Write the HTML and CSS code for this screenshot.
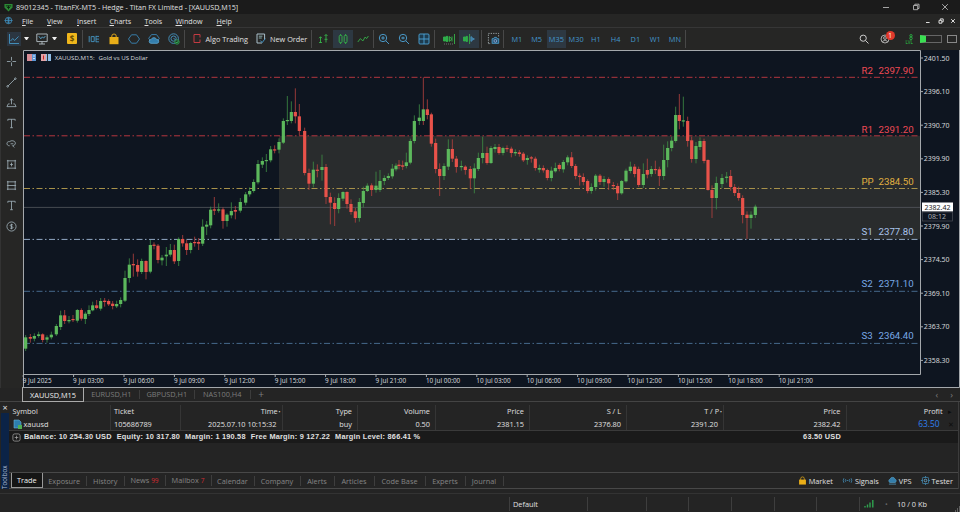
FILE: index.html
```
<!DOCTYPE html>
<html lang="en">
<head>
  <meta charset="UTF-8">
  <title>89012345 - TitanFX-MT5</title>
  <link rel="stylesheet" href="styles.css">
</head>
<body>

<div class="titlebar">
  <svg class="logo" viewBox="0 0 10 10"><path d="M.5 1h9v4L5 9.500.500 5z" fill="#2c8a35"/><path d="M2 3.200h6M5 3v4M3.300 5h3.400" stroke="#0d2411" fill="none"/></svg>
  <span class="title">89012345 - TitanFX-MT5 - Hedge - Titan FX Limited - [XAUUSD,M15]</span>
  <div class="winbtns">
    <svg viewBox="0 0 8 8"><path d="M1 4.5h6"/></svg>
    <svg viewBox="0 0 8 8"><path d="M1.5 2.5h4.2v4.2H1.5zM2.8 2.4V1.2H7v4.3H5.8"/></svg>
    <svg viewBox="0 0 8 8"><path d="M1.2 1.2l5.6 5.6M6.8 1.2L1.2 6.8"/></svg>
  </div>
</div>

<div class="menubar">
  <svg class="globe" viewBox="0 0 10 10"><circle cx="5" cy="5" r="3.6"/><path d="M0.6 5h8.8M5 1.4v7.2M3.2 3.2h3.6M3.2 6.8h3.6"/></svg>
  <div class="menu">
    <span><u>F</u>ile</span><span><u>V</u>iew</span><span><u>I</u>nsert</span><span><u>C</u>harts</span><span><u>T</u>ools</span><span><u>W</u>indow</span><span><u>H</u>elp</span>
  </div>
  <div class="docbtns">
    <svg viewBox="0 0 6 6"><path d="M1 4.5h3.6"/></svg>
    <svg viewBox="0 0 6 6"><path d="M1 2.4h2.8v2.8H1zM2.3 2.2V.9h2.9v2.9H4"/></svg>
    <svg viewBox="0 0 6 6"><path d="M1.2 1.2l3.6 3.6M4.8 1.2L1.2 4.8"/></svg>
  </div>
</div>

<div class="toolbar">
  <span class="slot first"><i class="hl"><svg viewBox="0 0 12 12"><path d="M1.5 1v9.5H11M2.5 8l2.3-2.5L6.6 7.5 10.5 3.5" stroke="#4596c4"/></svg></i></span>
  <span class="caret"></span>
  <span class="slot mon"><svg viewBox="0 0 12 12"><path d="M.8 1h10.4v7.6H.8zM3 11h6M6 8.6V11" stroke="#b9c4ca"/><path d="M2.8 3.2l2 2.6 1.6-2 1.2 1.4 1.8-2.2" stroke="#5aa7cf"/></svg></span>
  <span class="caret"></span>
  <span class="slot dollar"><b>$</b></span>
  <i class="sep"></i>
  <span class="slot"><svg viewBox="0 0 12 12"><path d="M1.2 3v6.2M3.2 3.6h3v5h-3zM8 2.8v6.4M8 3.4h3M8 6.1h3M8 8.8h3" stroke="#4596c4"/></svg></span>
  <span class="slot"><svg viewBox="0 0 12 12"><path d="M1.5 4h9v7.2h-9z" fill="#e9ae18" stroke="none"/><path d="M3.8 4.500V3a2.200 2 0 014.400 0v1.500" stroke="#e9ae18"/></svg></span>
  <span class="slot"><svg viewBox="0 0 12 12"><path d="M3.500 1.800h5L11.500 6 8.500 10.200h-5L.5 6z" stroke="#3a86b5"/></svg></span>
  <span class="slot"><svg viewBox="0 0 12 12"><path d="M3.500 1.600h5L11.300 5.300 8.800 9H3.200L.7 5.300z" stroke="#3a86b5"/><path d="M3 10.300a1.900 1.900 0 01.2-3.800 2.900 2.900 0 015.400 0A1.900 1.900 0 019 10.300z" fill="#347eac" stroke="#58a2cb"/></svg></span>
  <span class="slot"><svg viewBox="0 0 12 12"><circle cx="5.6" cy="5.6" r="4.8" stroke="#4596c4"/><circle cx="5.6" cy="5.6" r="2.6" stroke="#4596c4"/><path d="M5.5 5.5l2 1" stroke="#4596c4"/><circle cx="9" cy="9" r="2.2" fill="#23302a" stroke="#2fa34f"/><path d="M7.8 9l1 1 1.4-1.8" stroke="#2fd35f"/></svg></span>
  <i class="sep"></i>
  <span class="cmd algo"><svg viewBox="0 0 10 10"><path d="M2 1h6v3M8 6v3H2V1" stroke="#c23b42"/></svg>Algo Trading</span>
  <span class="cmd order"><svg viewBox="0 0 10 11"><path d="M1 1h7.6v6M1 1v9h5" stroke="#a9bfca"/><path d="M2.8 3.2h3.6M2.8 5h3" stroke="#8aa"/><path d="M4.4 7.6l1.8 2 3-4" stroke="#4596c4"/></svg>New Order</span>
  <i class="sep"></i>
  <span class="slot"><svg viewBox="0 0 12 12"><path d="M3.5 4v6M2 5.2l1.5-1.5L5 5.2M2 9.5h3M9 1.5v8M7.5 3L9 1.5 10.5 3M7.5 6.3h3" stroke="#35b24a"/></svg></span>
  <span class="slot on"><svg viewBox="0 0 12 12"><rect x="2.2" y="2.4" width="2.8" height="7.2" rx="1" stroke="#35b24a"/><rect x="7.2" y="2.4" width="2.8" height="7.2" rx="1" stroke="#35b24a"/><path d="M3.6 1v1.4M3.6 9.6V11M8.6 1v1.4M8.6 9.6V11" stroke="#35b24a"/></svg></span>
  <span class="slot"><svg viewBox="0 0 12 12"><path d="M.8 9l2.6-3.4L5.8 8l2.4-4 1.4 1.6L11.4 3" stroke="#35b24a"/></svg></span>
  <i class="sep"></i>
  <span class="slot"><svg viewBox="0 0 12 12"><circle cx="5" cy="5" r="3.7" stroke="#4da3d6"/><path d="M7.8 7.8l3.2 3.2M3.2 5h3.6M5 3.2v3.6" stroke="#4da3d6"/></svg></span>
  <span class="slot"><svg viewBox="0 0 12 12"><circle cx="5" cy="5" r="3.7" stroke="#4da3d6"/><path d="M7.8 7.8l3.2 3.2M3.2 5h3.6M5 3.6v2.8" stroke="#4da3d6"/></svg></span>
  <span class="slot"><svg viewBox="0 0 12 12"><rect x="1" y="1" width="10" height="10" rx="1" fill="#1d3b4e" stroke="#4da3d6"/><path d="M6 1v10M1 6h10" stroke="#4da3d6"/></svg></span>
  <i class="sep s4"></i>
  <span class="slot"><svg viewBox="0 0 12 12"><path d="M.5 4h2v4h-2zM3 3.4h2v5H3z" fill="#2fae4a" stroke="#2fae4a"/><path d="M6.5 3.5v5l2.2-2.5zM9 3.5v5M11.5 1v10" stroke="#35b24a"/><path d="M1 11h9" stroke="#777" stroke-dasharray="1 1"/></svg></span>
  <span class="slot on"><svg viewBox="0 0 12 12"><path d="M.5 4h2v4h-2zM3 3.4h1.6v5H3z" fill="#2fae4a" stroke="#2fae4a"/><path d="M6.6 1v10" stroke="#35b24a"/><path d="M8 6h3.6M8 3.6v4.8L10.6 6z" stroke="#4da3d6"/></svg></span>
  <i class="sep s5"></i>
  <span class="slot"><svg viewBox="0 0 14 14" class="big"><path d="M1.5 12V1.5h11V5M1.5 12.5h3" stroke="#aab4b8" stroke-dasharray="1.4 1.2"/><path d="M5.5 7.2h1.6L8 5.8h2.2L11 7.2h1.6v5H5.5z" fill="#24506b" stroke="#4da3d6"/><circle cx="9" cy="9.6" r="1.5" stroke="#9ad"/></svg></span>
  <i class="sep"></i>
  <div class="periods"><span>M1</span><span>M5</span><span class="on">M35</span><span>M30</span><span>H1</span><span>H4</span><span>D1</span><span>W1</span><span>MN</span></div>
  <i class="sep"></i>
  <div class="right">
    <svg class="search" viewBox="0 0 10 10"><circle cx="4.2" cy="4.2" r="3.1"/><path d="M6.5 6.5l3 3"/></svg>
    <span class="user"><svg viewBox="0 0 10 10"><circle cx="5" cy="5" r="4"/><circle cx="5" cy="4" r="1.4"/><path d="M2.4 8c1-2.2 4.2-2.2 5.2 0"/></svg><em>1</em></span>
    <span class="lvl"><svg viewBox="0 0 6 6"><circle cx="3" cy="1.7" r="1.2"/><circle cx="3" cy="4.3" r="1.3"/></svg>LVL</span>
    <span class="battery"></span>
    <span class="box"></span>
  </div>
</div>

<div class="main">
  <div class="rail">
    <svg viewBox="0 0 12 12"><path d="M6 1v4M6 7v4M1 6h4M7 6h4"/></svg>
    <svg viewBox="0 0 12 12"><path d="M2 10L10 2"/><circle cx="1.8" cy="10.2" r=".9"/><circle cx="10.2" cy="1.8" r=".9"/></svg>
    <svg viewBox="0 0 12 12"><path d="M1 10.5h10l-1.500-3H8M1 10.500l1.500-3H4M6 8V2M4.2 3.8L6 2l1.8 1.8"/></svg>
    <svg viewBox="0 0 12 12"><path d="M2 3V1.4h8V3M6 1.4v9.2M4.5 10.6h3"/></svg>
    <svg viewBox="0 0 12 12"><path d="M4 8.5c-4 0-4-5 0-4.6 1.4-1.6 6-1.2 6.2 1.4.2 1.600-1 3-3 3M7 8.300l2 2M5 6.300h3"/></svg>
    <svg viewBox="0 0 12 12"><path d="M1 2h10M1 10h10M2 1v10M10 1v10M6 4v4M4.500 6h3"/></svg>
    <svg viewBox="0 0 12 12"><path d="M1 2h10M1 6h10M1 10h10M2 1v10M10 1v10"/></svg>
    <svg viewBox="0 0 12 12"><path d="M2 3V1.400h8V3M6 1.400v9.200M4.500 10.600h3"/></svg>
    <svg viewBox="0 0 12 12"><circle cx="6" cy="6" r="5"/><path d="M7.600 4.400c-.6-.8-3-.8-3 .5 0 1.300 3 .9 3 2.200 0 1.400-2.600 1.300-3.200.4M6 3v6"/></svg>
  </div>
  <svg id="chart" class="chart" width="938" height="339" viewBox="22 49 938 339"></svg>
</div>

<div class="charttabs">
  <span class="active">XAUUSD,M15</span><span>EURUSD,H1</span><span>GBPUSD,H1</span><span>NAS100,H4</span><span class="plus">+</span>
  <div class="arrows"><span>‹</span><span>›</span></div>
</div>

<div class="toolbox">
  <div class="side"><span class="x">×</span><div class="strip"><span>Toolbox</span></div></div>
  <div class="panel">
    <div class="grid">
      <div class="col l"><span>Symbol</span><span class="sym"><svg viewBox="0 0 9 10"><path d="M1 1h5l2 2v6H1z" fill="#2d7fae" stroke="#6ab0d4" stroke-width=".6"/><path d="M5 6h4v4H5z" fill="#4fae54"/></svg>xauusd</span></div>
      <div class="col l"><span>Ticket</span><span>105686789</span></div>
      <div class="col"><span class="sort">Time</span><span>2025.07.10 10:15:32</span></div>
      <div class="col"><span>Type</span><span>buy</span></div>
      <div class="col"><span>Volume</span><span>0.50</span></div>
      <div class="col"><span>Price</span><span>2381.15</span></div>
      <div class="col"><span>S / L</span><span>2376.80</span></div>
      <div class="col"><span class="sort">T / P</span><span>2391.20</span></div>
      <div class="col"><span>Price</span><span>2382.42</span></div>
      <div class="col last"><span>Profit</span><span class="profit">63.50</span></div>
      <div class="close"><span>▸</span><span>✕</span></div>
    </div>
    <div class="balance">
      <svg viewBox="0 0 10 10"><rect x="1" y="1" width="8" height="8" rx="2"/><path d="M3 5h4M5 3v4"/></svg>
      <span>Balance: 10 254.30 USD</span><span>Equity: 10 317.80</span><span>Margin: 1 190.58</span><span>Free Margin: 9 127.22</span><span>Margin Level: 866.41 %</span>
      <span class="total">63.50 USD</span>
    </div>
    <div class="tabs">
      <span class="active">Trade</span><span>Exposure</span><span>History</span><span>News <em>99</em></span><span>Mailbox <em>7</em></span><span>Calendar</span><span>Company</span><span>Alerts</span><span>Articles</span><span>Code Base</span><span>Experts</span><span>Journal</span>
      <div class="services">
        <span><svg viewBox="0 0 10 10"><path d="M1.200 4h7.600v5.500H1.200z" fill="#e9ae18"/><path d="M3 4.500V3a2 2 0 014 0v1.500" stroke="#e9ae18" fill="none"/></svg>Market</span>
        <span class="sig"><svg viewBox="0 0 12 10"><path d="M2 2.500Q.5 5 2 7.500M4 3.500Q3 5 4 6.500M10 2.500q1.500 2.500 0 5M8 3.500q1 1.500 0 3M5 5h2" stroke="#4596c4" fill="none"/></svg>Signals</span>
        <span class="vps"><svg viewBox="0 0 10 10"><path d="M2 7.200a2 2 0 01.3-3.700 2.900 2.900 0 015.500 0A2 2 0 018 7.200z" fill="#347eac" stroke="#58a2cb" stroke-width=".7"/><path d="M1 9h8" stroke="#58a2cb"/></svg>VPS</span>
        <span class="test"><svg viewBox="0 0 10 10"><rect x="1.600" y="1.600" width="6.800" height="6.800" rx="1" stroke="#4596c4" fill="none"/><circle cx="5" cy="5" r="1.500" stroke="#7cc0e6" fill="none"/><path d="M5 0v1.600M5 8.400V10M0 5h1.600M8.400 5H10" stroke="#4596c4"/></svg>Tester</span>
      </div>
    </div>
  </div>
</div>

<div class="statusbar">
  <span class="profile">Default</span>
  <i class="wide"></i><i></i><i></i><i></i><i></i><i></i><i></i>
  <svg class="signal" viewBox="0 0 10 8"><path d="M1 7.500V6M3.500 7.500V4.500M6 7.500V2.500M8.800 7.500V0" stroke="#2fa34f" stroke-width="1.400"/></svg>
  <span class="dot">•</span>
  <span class="kb">10 / 0 Kb</span>
  <svg class="grip" viewBox="0 0 6 6"><path d="M5 1h1M3 3h1M5 3h1M1 5h1M3 5h1M5 5h1" stroke="#999"/></svg>
</div>

<script src="chart.js"></script>
</body>
</html>
```
FILE: chart.js
```
const svgNS = 'http://www.w3.org/2000/svg';
const chart = document.getElementById('chart');

function add(tag, attrs, text) {
  const el = document.createElementNS(svgNS, tag);
  for (const k in attrs) el.setAttribute(k, attrs[k]);
  if (text) el.textContent = text;
  chart.appendChild(el);
}

// x, body top, body bottom, high, low, direction (u = up, d = down, m = up body on a down wick)
// values are thirds of a pixel from the block origin
const blocks = [
  { ox: 0, oy: 120, bars: `77 652 686 645 693 u|91 651 656 642 668 d|103 648 656 640 664 u|116 643 648 635 653 u|128 643 660 640 667 d|141 652 659 646 668 u|154 644 652 635 658 u|169 618 643 612 648 u|182 586 621 572 630 u|194 586 603 570 612 d|207 600 604 588 610 u|219 597 600 585 606 d|232 570 602 567 608 u|244 570 596 565 602 d|256 581 597 575 612 u|267 570 582 556 588 u|278 556 571 545 574 u|290 556 564 540 568 d|302 543 566 534 572 u|314 542 546 534 560 d|326 543 553 538 558 d|338 551 558 543 568 d|350 552 559 542 564 u|362 540 552 532 562 u|375 474 542 452 546 u|388 434 474 415 488 u|400 432 436 401 470 d|413 435 455 418 470 d|425 423 456 416 462 u|438 423 456 421 478 d|451 375 455 360 460 u|462 374 377 367 388 d|474 377 420 372 430 d|486 413 421 405 436 u|499 404 409 381 438 u|511 390 404 372 410 u|523 390 424 374 432 d|536 357 423 352 438 u|548 357 370 345 380 d|560 370 390 360 405 d|572 369 390 365 400 u|584 366 369 350 380 d|596 366 371 354 390 d|608 320 371 298 378 u|620 314 320 303 345 u|632 269 316 260 325 u|643 268 272 231 285 d|656 268 272 250 278 u|669 268 303 262 326 d|681 284 303 280 320 u|694 273 286 247 295 u|706 270 275 258 298 d` },
  { ox: 200, oy: 70, bars: `121 396 422 384 428 u|137 373 398 366 406 u|149 363 373 352 380 u|161 336 363 328 368 u|174 282 337 270 343 u|187 273 284 262 294 u|199 270 273 252 306 u|212 238 271 228 277 u|224 238 241 226 250 d|237 216 239 205 250 u|250 153 218 145 222 u|262 150 153 78 165 u|274 126 153 94 160 u|286 126 139 55 160 d|298 139 183 102 196 d|314 183 309 173 316 d|327 309 341 296 360 d|340 299 341 275 352 u|352 299 302 283 322 d|366 291 300 254 332 u|378 291 381 282 402 d|391 381 398 368 463 d|404 399 417 382 468 d|416 384 417 370 430 u|429 366 386 364 393 u|441 366 402 364 416 d|453 402 426 388 434 d|466 424 444 414 458 d|478 396 444 384 455 u|490 363 399 350 412 u|502 347 363 340 366 u|515 346 360 340 378 d|528 347 360 305 368 u` },
  { ox: 350, oy: 70, bars: `90 333 360 300 366 u|103 324 333 316 345 u|115 318 324 310 330 u|127 296 319 282 326 u|138 287 298 280 304 u|147 284 288 270 298 d|158 286 290 272 300 d|169 277 288 248 295 u|181 213 278 206 283 u|193 153 213 136 220 u|208 143 153 103 165 u|220 118 153 22 165 m|232 118 135 88 148 d|244 133 221 128 230 d|257 219 297 206 310 d|269 297 318 280 378 d|282 288 318 280 330 u|295 237 290 208 300 u|307 237 266 208 276 d|319 266 291 258 308 d|334 288 291 272 302 u|346 290 300 286 314 d|361 297 325 288 357 d|373 295 325 280 370 u|385 264 297 248 303 u|398 249 264 200 280 u|411 249 279 230 284 d|423 234 279 228 282 u|435 231 237 222 248 u|447 231 249 222 254 d|459 234 249 230 256 u|471 234 237 226 246 d|484 236 249 230 262 d|496 246 250 238 258 u|508 247 252 240 260 d|520 251 271 246 276 d|532 264 270 256 284 u` },
  { ox: 520, oy: 70, bars: `34 262 265 258 278 d|46 266 294 260 302 d|58 294 299 284 308 u|70 294 301 286 308 d|82 300 324 296 331 d|94 302 324 290 334 u|106 294 304 278 308 u|118 285 297 280 304 d|130 276 298 270 308 u|143 262 277 256 286 u|155 262 288 246 294 d|167 288 318 282 328 d|179 317 321 310 347 d|190 321 336 310 346 d|203 333 363 328 370 d|214 351 363 340 371 u|227 317 351 312 362 u|240 317 336 312 345 d|252 327 336 318 350 u|266 327 340 322 360 d|280 345 348 336 360 d|293 348 370 340 390 d|305 333 370 330 374 u|318 302 334 296 338 u|331 290 303 275 310 u|344 290 312 282 322 d|356 297 345 290 351 d|370 312 345 280 354 u|382 300 314 266 325 d|394 297 312 288 320 u|406 297 300 272 312 d|418 298 318 290 348 d|431 270 318 224 330 u|443 234 270 214 292 u|455 212 234 200 244 u|467 135 213 110 218 u|478 135 153 72 178 d|490 151 154 80 170 u|503 153 213 140 230 d|515 211 267 200 278 d|528 228 267 216 280 u` },
  { ox: 640, oy: 70, bars: `180 213 231 202 240 u|192 213 273 206 280 d|204 270 360 268 362 d|216 360 384 346 444 d|229 339 384 320 418 u|246 324 342 312 354 u|260 320 323 306 338 u|272 318 351 300 362 d|284 351 369 342 378 d|296 369 384 350 392 d|308 384 435 376 460 d|321 434 444 424 507 d|333 434 444 424 476 u|346 410 435 404 444 u` }
];

const levels = [
  ['R2', '2397.90', 77.3, 'res'],
  ['R1', '2391.20', 135.8, 'res'],
  ['PP', '2384.50', 188.5, 'pivot'],
  ['S1', '2377.80', 239.4, 'sup1'],
  ['S2', '2371.10', 291.3, 'sup'],
  ['S3', '2364.40', 343.4, 'sup']
];
const labelY = [74.3, 132.9, 184.9, 235.4, 287.2, 339.4];

add('rect', { x: 23, y: 50, width: 936, height: 337, class: 'bg' });
add('rect', { x: 279, y: 135.8, width: 641, height: 103.5, class: 'band' });
levels.forEach(l => add('line', { x1: 24, x2: 920, y1: l[2], y2: l[2], class: 'level ' + l[3] }));
add('line', { x1: 24, x2: 920, y1: 207.4, y2: 207.4, class: 'price-line' });

blocks.forEach(b => {
  b.bars.split('|').forEach(row => {
    const [x, top, bot, hi, lo, dir] = row.split(' ');
    const cx = b.ox + x / 3;
    add('line', { x1: cx, x2: cx, y1: b.oy + hi / 3, y2: b.oy + lo / 3, class: 'wick ' + dir });
    add('rect', { x: cx - 1.6, y: b.oy + top / 3, width: 3.2, height: Math.max((bot - top) / 3, 1.2), class: 'body ' + dir });
  });
});

levels.forEach((l, i) => {
  add('text', { x: 861.5, y: labelY[i], class: 'lbl ' + l[3] }, l[0]);
  add('text', { x: 878.5, y: labelY[i], class: 'lbl ' + l[3] }, l[1]);
});

// frame and axes
add('path', { d: 'M23.5 387V50.500H920.500V374.500H23.500M22 387.500H959.500V50', class: 'frame' });

['2401.50', '2396.10', '2390.70', '2399.90', '2385.30', '2379.90', '2374.50', '2369.10', '2363.70', '2358.30'].forEach((p, i) => {
  const y = 58 + i * 33.6;
  add('line', { x1: 921, x2: 923, y1: y, y2: y, class: 'frame' });
  add('text', { x: 923.700, y: y + 2.500, class: 'axis' }, p);
});

['9 Jul 2025', '9 Jul 03:00', '9 Jul 06:00', '9 Jul 09:00', '9 Jul 12:00', '9 Jul 15:00', '9 Jul 18:00', '9 Jul 21:00',
 '10 Jul 00:00', '10 Jul 03:00', '10 Jul 06:00', '10 Jul 09:00', '10 Jul 12:00', '10 Jul 15:00', '10 Jul 18:00', '10 Jul 21:00'].forEach((t, i) => {
  const x = 23.200 + i * 50.400;
  add('line', { x1: x, x2: x, y1: 375, y2: 377, class: 'frame' });
  add('text', { x: x - 0.500, y: 383, class: 'axis time' }, t);
});

add('rect', { x: 922, y: 202.500, width: 31, height: 9, class: 'tag' });
add('text', { x: 924.500, y: 210, class: 'axis tag-text' }, '2382.42');
add('rect', { x: 922.500, y: 212, width: 30, height: 9, class: 'timer' });
add('text', { x: 928, y: 219, class: 'axis timer-text' }, '08:12');

// symbol caption
add('path', { d: 'M27 54h5v7h-5z', fill: '#d88f98' });
add('path', { d: 'M32 54h4v7h-4z', fill: '#5b97d6' });
add('path', { d: 'M33 56h2M33 58.500h2', stroke: '#fff', 'stroke-width': .7 });
add('path', { d: 'M41 54h5v7h-5z', fill: '#e2a3a6' });
add('path', { d: 'M43.500 55.500v4', stroke: '#c22', 'stroke-width': 1 });
add('path', { d: 'M46 54h5v7h-5z', fill: '#8fbde6' });
add('path', { d: 'M47.500 54v7', stroke: '#333', 'stroke-width': 1 });
add('text', { x: 54.700, y: 60.200, class: 'caption' }, 'XAUUSD,M15:');
add('text', { x: 98.500, y: 60.200, class: 'caption' }, 'Gold vs US Dollar');
```
FILE: styles.css
```
* {
  box-sizing: border-box;
}

body {
  margin: 0;
  width: 960px;
  height: 512px;
  overflow: hidden;
  display: flex;
  flex-direction: column;
  background: #242424;
  color: #e0e0e0;
  font-family: "Open Sans", "Noto Sans", sans-serif;
  font-size: 7.350px;
  line-height: 10px;
  white-space: nowrap;
}

svg {
  fill: none;
  display: block;
  flex: none;
}

em, i, b {
  font-style: normal;
}

u {
  text-underline-offset: 1px;
  text-decoration-thickness: .5px;
}

/* title and menu */
.titlebar {
  height: 14px;
  background: #1b1b1b;
  display: flex;
  align-items: center;
  padding-left: 4px;
}

.logo {
  width: 9px;
  height: 9px;
  margin-right: 3px;
}

.title {
  font-size: 7.170px;
}

.winbtns {
  margin-left: auto;
  display: flex;
  gap: 21.5px;
  padding-right: 11px;
}

.winbtns svg {
  width: 8px;
  height: 8px;
  stroke: #c8c8c8;
  stroke-width: .8;
}

.menubar {
  height: 13px;
  background: #262625;
  display: flex;
  align-items: center;
  padding-left: 4px;
}

.globe {
  width: 9px;
  height: 9px;
  stroke: #3f8fc0;
  stroke-width: .9;
}

.menu {
  display: grid;
  grid-template-columns: 25px 30px 32.500px 35px 31px 41px 30px;
  margin-left: 9px;
  font-size: 7.150px;
}

.docbtns {
  margin-left: auto;
  display: flex;
  gap: 6.500px;
  padding-right: 4px;
}

.docbtns svg {
  width: 6px;
  height: 6px;
  stroke: #ddd;
  stroke-width: 1;
}

/* toolbar */
.toolbar {
  height: 22px;
  display: flex;
  align-items: center;
  padding-left: 4px;
  background: #262625;
  border-top: 1px solid #363636;
}

.slot {
  width: 20px;
  height: 18px;
  flex: none;
  display: flex;
  align-items: center;
  justify-content: center;
}

.slot svg {
  width: 12px;
  height: 12px;
  stroke-width: .9;
}

.slot .big {
  width: 13px;
  height: 13px;
}

.slot.on, .periods .on {
  background: #2d3842;
}

.hl {
  background: #2b3641;
  padding: 1px;
}

.caret {
  border: 2.500px solid transparent;
  border-top: 3px solid #eee;
  border-bottom: 0;
  width: 5px;
  margin-right: 1px;
}

.mon {
  margin-left: 2px;
}

.dollar {
  margin-left: 4px;
}

.dollar b {
  width: 10px;
  height: 11px;
  background: #f0b71c;
  color: #6b4c00;
  text-align: center;
  font-size: 8px;
  line-height: 11px;
  border-radius: 1px;
}

.sep {
  width: 1px;
  height: 18px;
  flex: none;
  background: #484848;
  margin-right: .5px;
}

.s4 {
  margin-right: 3.500px;
}

.s5 {
  margin: 0 1.500px 0 2px;
}

.cmd {
  display: flex;
  align-items: center;
  font-size: 7.300px;
}

.cmd svg {
  width: 10px;
  height: 11px;
}

.algo {
  margin-left: 7px;
  width: 64px;
  gap: 3.500px;
}

.order {
  width: 55px;
  gap: 4px;
}

.periods {
  display: grid;
  grid-template-columns: repeat(9, 19.750px);
  margin-left: 2.500px;
  color: #4496cc;
  text-align: center;
  line-height: 18px;
}

.right {
  margin-left: auto;
  display: flex;
  align-items: center;
  padding-right: 3.500px;
}

.search {
  width: 10px;
  height: 10px;
  stroke: #ccc;
  margin-right: 11px;
}

.user {
  position: relative;
  margin-right: 16px;
}

.user svg {
  width: 10px;
  height: 10px;
  stroke: #ccc;
  stroke-width: .8;
}

.user em {
  position: absolute;
  left: 6px;
  top: -3px;
  width: 9px;
  height: 9px;
  border-radius: 50%;
  background: #e0392b;
  color: #fff;
  font-size: 6.500px;
  line-height: 9px;
  text-align: center;
}

.lvl {
  color: #2bd14a;
  font-size: 4.500px;
  line-height: 4px;
  width: 9px;
  margin-right: 5px;
}

.lvl svg {
  width: 6px;
  height: 6px;
  stroke: #2bd14a;
  stroke-width: .7;
  margin-left: 2px;
}

.battery {
  width: 22px;
  height: 8px;
  border: 1px solid #666;
  border-left: 6px solid #3ae052;
  margin-right: 5px;
}

.box {
  width: 10px;
  height: 8px;
  border: 1px solid #888;
}

/* chart area */
.main {
  height: 339px;
  display: flex;
  background: #262625;
}

.rail {
  width: 22px;
  padding-top: 7px;
  display: flex;
  flex-direction: column;
  align-items: center;
  gap: 9.600px;
  border-left: 1px solid #333;
}

.rail svg {
  width: 11px;
  height: 11px;
  stroke: #9fb0b8;
  stroke-width: .9;
}

.bg { fill: #0e1520; }
.band { fill: #292c2d; }

.level {
  stroke-width: 1;
  stroke-dasharray: 6 2.500 1.500 2.500;
}

.level.res { stroke: #b5363f; }
.level.pivot { stroke: #a8924a; }
.level.sup1 { stroke: #93aac6; }
.level.sup { stroke: #466a8c; }

.price-line {
  stroke: #53585d;
  stroke-width: .8;
}

.wick { stroke-width: .8; }
.wick.u { stroke: #3f8f45; }
.wick.d, .wick.m { stroke: #b8413f; }
.body.u, .body.m { fill: #5cb85c; }
.body.d { fill: #e8524a; }

.lbl {
  font-family: Roboto, sans-serif;
  font-size: 9.700px;
}

.lbl.res { fill: #ef4a55; }
.lbl.pivot { fill: #e0b040; }
.lbl.sup1 { fill: #a9c4ec; }
.lbl.sup { fill: #78a8e6; }

.frame {
  stroke: #a4a8ac;
  stroke-width: 1;
}

.axis {
  font-family: "Noto Sans", sans-serif;
  font-size: 7px;
  fill: #d4d6d8;
}

.time { font-size: 6.400px; }
.tag { fill: #fff; }
.tag-text { fill: #222; }
.timer-text { fill: #a9adb2; }

.timer {
  fill: #0e1520;
  stroke: #4a4f57;
  stroke-width: .7;
}

.caption {
  font-size: 6.150px;
  fill: #d8dade;
}

/* chart tabs */
.charttabs {
  height: 14px;
  display: flex;
  align-items: center;
  padding-left: 22px;
  color: #7d7d7d;
  border-bottom: 1px solid #444;
}

.charttabs > span {
  width: 55.500px;
  height: 9px;
  line-height: 9px;
  text-align: center;
  border-right: 1px solid #3c3c3c;
}

.charttabs > .active {
  width: 62px;
  height: 14px;
  line-height: 14px;
  border: 1px solid #aaa;
  border-top: 0;
  color: #f0f0f0;
}

.charttabs > .plus {
  width: 21px;
  border: 0;
  font-size: 10px;
}

.arrows {
  margin-left: auto;
  display: flex;
  gap: 12px;
  padding-right: 7px;
  font-size: 9px;
}

/* toolbox */
.toolbox {
  height: 87px;
  display: flex;
}

.side {
  width: 9px;
  padding-left: 1px;
  display: flex;
  flex-direction: column;
}

.x {
  text-align: center;
  font-size: 9px;
  height: 11px;
  line-height: 12px;
}

.strip {
  flex: 1;
  background: #0b2347;
  writing-mode: vertical-rl;
  transform: rotate(180deg);
  line-height: 8px;
  font-size: 6.300px;
  color: #a9b8cc;
}

.panel {
  flex: 1;
  display: flex;
  flex-direction: column;
  border-right: 1px solid #3c3c3c;
  margin-right: 1px;
}

.grid {
  height: 29px;
  padding-top: 3px;
  display: grid;
  grid-template-columns: 101.500px 70.500px 101.500px 75.500px 78px 94px 97px 97px 122.500px 101px 1fr;
  border-bottom: 1px solid #3a3a3a;
}

.col {
  display: flex;
  flex-direction: column;
  gap: .5px;
  line-height: 12px;
  text-align: right;
  padding-right: 5px;
  border-right: 1px solid #353535;
}

.col.l {
  text-align: left;
  padding-left: 3.500px;
}

.col.last {
  border: 0;
}

.sort::after {
  content: "•";
  font-size: 5px;
  line-height: 1;
  margin-right: -4px;
  margin-left: 1px;
}

.sym {
  display: flex;
  align-items: center;
  gap: 2px;
}

.sym svg {
  width: 9px;
  height: 10px;
}

.profit {
  color: #2f80f0;
  font-size: 8.400px;
  padding-right: 3px;
}

.close {
  display: flex;
  flex-direction: column;
  gap: 1px;
  line-height: 12px;
  color: #0c0c0c;
}

.balance {
  height: 12px;
  background: #1a1a1a;
  display: flex;
  align-items: center;
  gap: 5px;
  padding-left: 3px;
  font-family: "Liberation Sans", sans-serif;
  font-weight: bold;
  font-size: 7.350px;
  letter-spacing: .22px;
}

.balance svg {
  width: 9px;
  height: 9px;
  stroke: #aaa;
  stroke-width: .8;
  margin-right: -2px;
}

.total {
  margin-left: auto;
  margin-right: 117px;
}

.tabs {
  height: 17px;
  margin-top: auto;
  display: grid;
  grid-template-columns: 33.500px 44.500px 37.500px 41px 46px 43px 46px 34px 40px 51px 40px 38px 1fr;
  align-items: center;
  border-top: 1px solid #484848;
  border-bottom: 1px solid #484848;
  color: #858585;
  text-align: center;
}

.tabs > span {
  border-right: 1px solid #3e3e3e;
}

.tabs > .active {
  height: 15px;
  margin-left: 2px;
  align-self: start;
  line-height: 15px;
  border: 1px solid #999;
  border-top: 0;
  background: #151515;
  color: #f2f2f2;
}

.tabs em {
  color: #d22b32;
  font-size: 6.500px;
}

.services {
  display: flex;
  justify-content: flex-end;
  gap: 9px;
  padding-right: 5px;
  color: #e0e0e0;
}

.services span {
  display: flex;
  align-items: center;
  gap: 2px;
}

.services svg {
  width: 9px;
  height: 9px;
  stroke-width: .8;
}

.services .sig svg {
  width: 11px;
}

/* status */
.statusbar {
  height: 19px;
  margin-top: 4px;
  border-top: 1px solid #333;
  display: flex;
  align-items: center;
  padding: 2px 0 0 509px;
}

.statusbar i {
  width: 42.700px;
  height: 14px;
  flex: none;
  border-left: 1px solid #3e3e3e;
}

.statusbar .wide {
  width: 58.500px;
}

.statusbar i:last-of-type {
  width: 5px;
}

.profile {
  width: 78px;
  flex: none;
  padding-left: 3px;
  border-left: 1px solid #3e3e3e;
  line-height: 14px;
}

.signal {
  width: 10px;
  height: 8px;
}

.dot {
  margin-left: 11px;
  color: #666;
  width: 12px;
}

.grip {
  width: 6px;
  height: 6px;
  margin-left: auto;
  align-self: flex-end;
}
```
